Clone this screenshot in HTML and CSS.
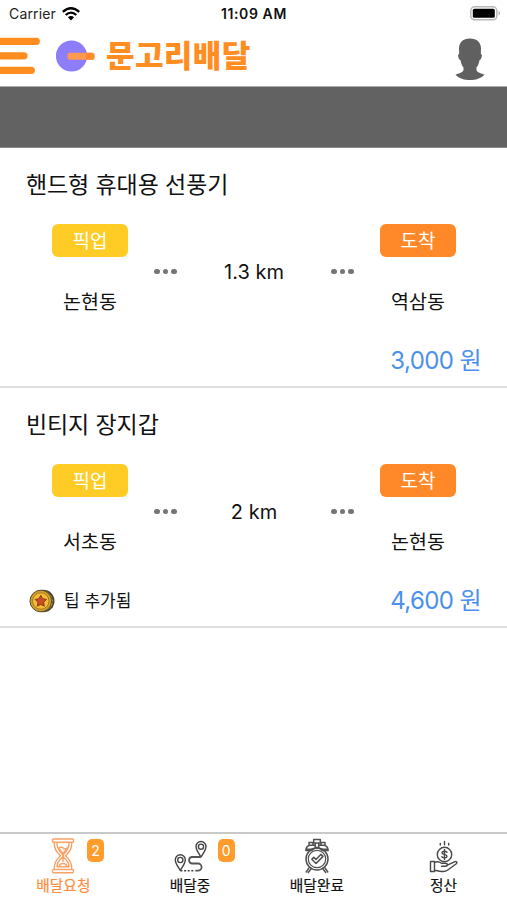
FILE: index.html
```html
<!DOCTYPE html>
<html lang="ko">
<head>
<meta charset="utf-8">
<title>문고리배달</title>
<link rel="stylesheet" href="styles.css">
</head>
<body>
<div class="status">
  <span class="carrier">Carrier</span>
  <svg class="wifi" width="18" height="14" viewBox="0 0 18 14"><g fill="none" stroke="#000" stroke-width="2.3"><path d="M.8 4.8Q9-2.2 17.2 4.8"/><path d="M3.7 8Q9 3.3 14.3 8"/></g><path d="M5.9 10.3Q9 7.8 12.1 10.3L9 13.6Z"/></svg>
  <span class="time">11:09 AM</span>
  <svg class="battery" width="31" height="15" viewBox="0 0 31 15"><rect x=".8" y=".8" width="26" height="13" rx="3.8" fill="#fff" stroke="#b8b8b8" stroke-width="1.5"/><rect x="2.8" y="2.8" width="22" height="9" rx="1.5"/><path d="M28.5 4.8Q31.5 7.3 28.5 9.8Z" fill="#b0b0b0"/></svg>
</div>
<header class="header">
  <svg class="menu" width="40" height="38" viewBox="0 0 40 38"><g stroke="#ff8d1f" stroke-width="7.3" stroke-linecap="round"><path d="M-4 4.3H36.3M-4 18.8H24M-4 33.3H31.3"/></g></svg>
  <svg class="logo" width="40" height="34" viewBox="0 0 40 34"><circle cx="15.5" cy="17" r="15.6" fill="#8d7df8"/><rect x="11.5" y="13.8" width="27" height="7" rx="2.2" fill="#ff9850"/><path d="M30 13.8h6Q38.5 13.8 38.5 17.3T36 20.8H30Z" fill="#ff8a30"/></svg>
  <h1 class="brand">문고리배달</h1>
  <svg class="avatar" width="30" height="42" viewBox="0 0 30 42"><path fill="#606060" d="M15 .5C22 .5 26 4.5 26 10.5L25.8 16C28 16 26.5 21.5 24.5 22.2C23.8 25.8 22.8 28 21.5 29.5V32.2C23 35 26.5 35.3 29.5 36.7C26 40.5 20.5 42 15 42S4 40.5 .5 36.7C3.5 35.3 7 35 8.5 32.2V29.5C7.2 28 6.2 25.8 5.5 22.2C3.5 21.5 2 16 4.2 16L4 10.5C4 4.5 8 .5 15 .5Z"/></svg>
</header>
<div class="banner"></div>
<main class="list">
  <article class="card">
    <h2 class="title">핸드형 휴대용 선풍기</h2>
    <div class="route">
      <div class="stop"><span class="tag pickup">픽업</span><span class="place">논현동</span></div>
      <span class="dots"><i></i><i></i><i></i></span>
      <span class="distance">1.3 km</span>
      <span class="dots"><i></i><i></i><i></i></span>
      <div class="stop"><span class="tag arrive">도착</span><span class="place">역삼동</span></div>
    </div>
    <div class="foot"><span class="price">3,000 원</span></div>
  </article>
  <article class="card">
    <h2 class="title">빈티지 장지갑</h2>
    <div class="route">
      <div class="stop"><span class="tag pickup">픽업</span><span class="place">서초동</span></div>
      <span class="dots"><i></i><i></i><i></i></span>
      <span class="distance">2 km</span>
      <span class="dots"><i></i><i></i><i></i></span>
      <div class="stop"><span class="tag arrive">도착</span><span class="place">논현동</span></div>
    </div>
    <div class="foot">
      <svg class="coin" width="26" height="24" viewBox="0 0 26 24"><ellipse cx="14.3" cy="12" rx="11.2" ry="11.3" fill="#4b4630"/><ellipse cx="14" cy="12" rx="9.8" ry="10" fill="#d8ad32"/><path d="M20 4l3 3M22 9l3 1M22 13h3M21 17l3 1" stroke="#4b4630"/><circle cx="11.8" cy="12" r="10.8" fill="#d59b2c" stroke="#55502f"/><circle cx="11.8" cy="12" r="8.2" fill="#f5bd35" stroke="#937326" stroke-width=".8"/><path d="M11.8 6.2l1.8 3.5 3.9.7-2.8 2.8.6 4-3.5-1.8-3.5 1.8.6-4-2.8-2.8 3.9-.7z" fill="#c94d24" stroke="#86351f" stroke-width=".9" stroke-linejoin="round"/></svg>
      <span class="tip">팁 추가됨</span><span class="price">4,600 원</span>
    </div>
  </article>
</main>
<nav class="tabs">
  <a class="tab active">
    <svg width="36" height="36" viewBox="0 0 36 36" fill="none" stroke="#f8a266" stroke-width="1.4" stroke-linejoin="round"><rect x="7.5" y="1" width="21" height="3.2" rx="1"/><rect x="7.5" y="31.5" width="21" height="3.2" rx="1"/><path d="M9.2 4.2C9.2 11 11 13.2 15.5 17.8C11 22 9.2 25 9.2 31.5M26.8 4.2C26.8 11 25 13.2 20.5 17.8C25 22 26.8 25 26.8 31.5M11.8 4.2C12 10.5 14.2 13.3 17.5 16.3V19.2C14 22 12 25.5 12 28.8H24C24 25.5 22 22 18.5 19.2V16.3C22 13.3 24 10.5 24.2 4.2M14 10C16 8.7 17.2 8.8 18.5 10.2S21 11 22.3 9.7C21 12.7 19.5 14 18 15.4C16.5 14 15 12.5 14 10ZM14 28.5C14.5 26.3 16 25.5 18 25.5S21.5 26.3 22 28.5M18 17V24"/></svg>
    <span class="label">배달요청</span><b class="count">2</b>
  </a>
  <a class="tab">
    <svg width="36" height="36" viewBox="0 0 36 36" fill="none" stroke="#444" stroke-width="1.4" stroke-linejoin="round"><g transform="translate(.5 1.5)"><path d="M7.8 31C5.5 27 2.8 24 2.8 20.2A5 5 0 0 1 12.8 20.2C12.8 24 10 27 7.8 31ZM28.5 17.5C26.2 13.5 23.5 10.5 23.5 7A5 5 0 0 1 33.5 7C33.5 10.5 30.8 13.5 28.5 17.5Z"/><circle cx="7.8" cy="20.5" r="2.6"/><circle cx="28.5" cy="7.2" r="2.6"/><path d="M28.5 17.5H19.3A3.3 3.3 0 0 0 19.3 24H25.5A3.6 3.6 0 0 1 25.5 31.2H23.2" stroke="#555" stroke-width="1.8"/><path d="M8 31.2H23" stroke-dasharray="2 1.6"/></g></svg>
    <span class="label">배달중</span><b class="count">0</b>
  </a>
  <a class="tab">
    <svg width="36" height="36" viewBox="0 0 36 36" fill="none" stroke="#505050" stroke-width="1.5" stroke-linejoin="round" stroke-linecap="round"><circle cx="18" cy="21" r="11"/><circle cx="18" cy="21" r="8.7" stroke-width="1.2"/><path d="M12.8 21.2l2-2 2.2 2.2 4.8-5 2.2 2L17 25.5ZM10 29.8L7.2 34M12 31L9.3 34.5M26 29.8L28.8 34M24 31L26.7 34.5"/><path d="M14.7 1.5H21.3V5H19.7V9.5H16.3V5H14.7ZM16 5H20M16 7.2H11.8C8.7 7.2 7 9.3 6.8 12.5H12.8L15.8 10M20 7.2H24.2C27.3 7.2 29 9.3 29.2 12.5H23.2L20.2 10M10 7V4.5H14V7M22 7V4.5H26V7M7.2 11.3H14M22 11.3H28.8"/></svg>
    <span class="label">배달완료</span>
  </a>
  <a class="tab">
    <svg width="36" height="36" viewBox="0 0 36 36" fill="none" stroke="#484848" stroke-width="1.4" stroke-linejoin="round" stroke-linecap="round"><g transform="translate(0 1)"><circle cx="18.5" cy="15.5" r="7.2"/><path d="M18.5 2.5V5.8M14.3 4.5V6M22.7 4.5V6M18.5 10.5V20.5M21 13.3C19.5 11.6 16 12 16 13.8C16 16 21 14.8 21 17.3C21 19.3 17.3 19.5 15.8 17.7"/><path d="M4.5 22.5H8.5V32.5H4.5ZM8.5 23.3C11 22.3 13.2 22.3 15.5 24.2H19.3C22 24.2 22 27.2 19.3 27.2H15.5M21.4 26.2L28.5 22.8C30.5 22 31.7 23.5 30.3 24.8L21.8 31C18.8 33.3 16 32.8 8.5 31.2"/></g></svg>
    <span class="label">정산</span>
  </a>
</nav>
</body>
</html>
```
FILE: styles.css
```css
* { box-sizing: border-box; margin: 0; padding: 0; }
body {
  width: 507px;
  height: 900px;
  display: flex;
  flex-direction: column;
  overflow: hidden;
  background: #fff;
  color: #111;
  font-family: Inter, "Noto Sans CJK KR", sans-serif;
}
svg { display: block; flex: none; }
.status {
  height: 28px;
  display: grid;
  grid-template-columns: 52px 160px 67px 1fr;
  align-items: center;
  padding: 0 6px 0 9px;
  font-size: 14px;
}
.carrier { color: #222; line-height: 28px; letter-spacing: .15px; }
.wifi { margin: -1px 0 0 1px; }
.time { font-weight: 600; font-size: 14px; letter-spacing: .6px; white-space: nowrap; line-height: 28px; }
.battery { justify-self: end; margin-top: -1px; }
.header {
  height: 59px;
  display: flex;
  align-items: center;
  padding: 0 22px 2px 0;
  border-bottom: 1px solid #aaa;
}
.logo { margin-left: 16px; }
.brand {
  margin: 0 0 0 10px;
  font-size: 31px;
  line-height: 40px;
  font-weight: 900;
  letter-spacing: .4px;
  color: #ff8d1f;
  white-space: nowrap;
}
.avatar { margin-left: auto; margin-top: 5px; }
.banner { height: 61px; background: #626262; border-bottom: 1px solid #888; }
.card {
  height: 240px;
  border-bottom: 2px solid #dedede;
  padding: 18px 26px 0;
}
.title { font-size: 23px; line-height: 39px; font-weight: 400; letter-spacing: -.1px; }
.route {
  display: grid;
  grid-template-columns: 76px 75px 102px 75px 76px;
  margin: 19px 0 0 26px;
  height: 95px;
  align-items: center;
  justify-items: center;
}
.stop { display: flex; flex-direction: column; align-items: center; height: 95px; width: 76px; }
.tag {
  width: 76px;
  height: 33px;
  border-radius: 6px;
  color: #fff;
  font-size: 19px;
  line-height: 35px;
  text-align: center;
}
.pickup { background: #ffcb25; }
.arrive { background: #ff8928; }
.place { font-size: 19.5px; line-height: 30px; margin-top: 30px; }
.dots { display: flex; gap: 3px; }
.dots i { width: 5.5px; height: 5.5px; border-radius: 50%; background: #757575; }
.distance { font-size: 20px; line-height: 30px; white-space: nowrap; }
.foot { display: flex; align-items: center; height: 40px; margin-top: 22px; }
.coin { margin-left: 3px; margin-top: -1px; }
.tip { margin-left: 9px; font-size: 17px; line-height: 30px; }
.price { margin-left: auto; color: #4a90ec; font-size: 24px; letter-spacing: -.6px; line-height: 40px; }
.tabs {
  margin-top: auto;
  height: 68px;
  border-top: 2px solid #c9c9c9;
  display: grid;
  grid-template-columns: repeat(4, 1fr);
}
.tab { position: relative; display: flex; flex-direction: column; align-items: center; padding-top: 4px; }
.label { font-size: 14.7px; font-weight: 400; line-height: 22px; margin-top: 1px; -webkit-text-stroke: .2px currentColor; }
.active .label { color: #ff8b3d; }
.count {
  position: absolute;
  left: 87px;
  top: 5px;
  width: 17px;
  height: 23px;
  border-radius: 5px;
  background: #ff9c2c;
  color: #fff;
  font-size: 14px;
  font-weight: 400;
  line-height: 23px;
  text-align: center;
}
.tab:nth-child(2) .count { left: 91px; }
```
